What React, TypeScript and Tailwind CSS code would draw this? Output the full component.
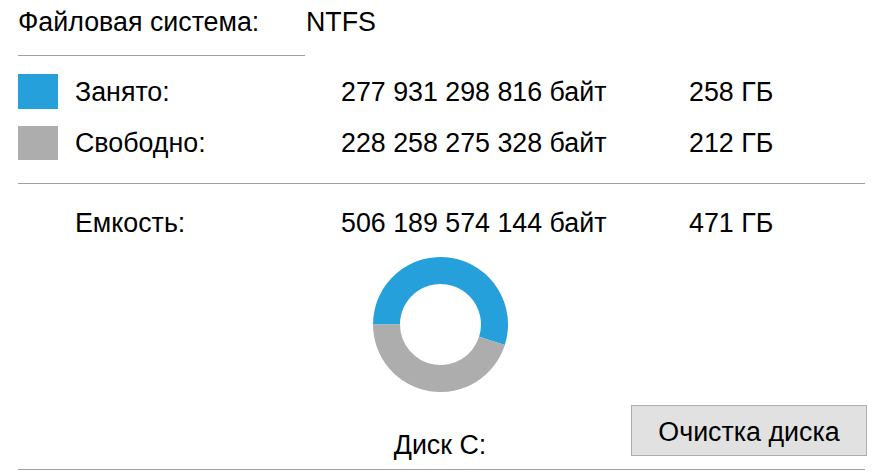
import React from "react";

function sector(cx: number, cy: number, ro: number, ri: number, a0: number, a1: number) {
  const r = (d: number) => (d * Math.PI) / 180;
  const p = (rad: number, a: number) => [cx + rad * Math.cos(r(a)), cy + rad * Math.sin(r(a))];
  const large = a1 - a0 > 180 ? 1 : 0;
  const [x0, y0] = p(ro, a0);
  const [x1, y1] = p(ro, a1);
  const [x2, y2] = p(ri, a1);
  const [x3, y3] = p(ri, a0);
  return `M${x0} ${y0} A${ro} ${ro} 0 ${large} 1 ${x1} ${y1} L${x2} ${y2} A${ri} ${ri} 0 ${large} 0 ${x3} ${y3} Z`;
}

function Donut() {
  const used = 277931298816 / 506189574144;
  const end = 180 + used * 360;
  return (
    <svg width="135" height="135" viewBox="0 0 135 135">
      <path d={sector(67.5, 67.5, 67.5, 40.5, 180, end)} fill="#26a0da" />
      <path d={sector(67.5, 67.5, 67.5, 40.5, end, 540)} fill="#adadad" />
    </svg>
  );
}

export default function App() {
  const font = { fontFamily: '"Liberation Sans", Arial, sans-serif' };
  return (
    <div
      className="w-[883px] h-[475px] bg-white text-black text-[26.8px] leading-[30px] px-[18px] pt-[7px] overflow-hidden"
      style={font}
    >
      <div className="flex h-[30px]">
        <span className="w-[288px]">Файловая система:</span>
        <span>NTFS</span>
      </div>
      <div className="mt-[18px] h-px w-[287px] bg-[#a0a0a0]" />

      <div className="mt-[18px] grid grid-cols-[57px_266px_348px_auto] items-center h-[35px]">
        <div className="w-[40px] h-[35px] bg-[#26a0da]" />
        <span>Занято:</span>
        <span>277 931 298 816 байт</span>
        <span>258 ГБ</span>
      </div>
      <div className="mt-[16px] grid grid-cols-[57px_266px_348px_auto] items-center h-[35px]">
        <div className="w-[40px] h-[34px] bg-[#adadad]" />
        <span>Свободно:</span>
        <span>228 258 275 328 байт</span>
        <span>212 ГБ</span>
      </div>
      <div className="mt-[23px] h-px w-full bg-[#a0a0a0]" />

      <div className="mt-[24px] grid grid-cols-[57px_266px_348px_auto] items-center h-[30px]">
        <div />
        <span>Емкость:</span>
        <span>506 189 574 144 байт</span>
        <span>471 ГБ</span>
      </div>

      <div className="mt-[19px] flex justify-center pr-[3px]">
        <Donut />
      </div>

      <div className="mt-[13px] grid grid-cols-[1fr_auto_1fr] h-[55px]">
        <div />
        <span className="self-end pr-[3px]">Диск C:</span>
        <div className="flex justify-end -mr-[2px]">
          <button className="w-[236px] h-[51px] bg-[#e1e1e1] border border-[#adadad] text-[26.8px] leading-[30px] pt-[2px]" style={font}>
            Очистка диска
          </button>
        </div>
      </div>
      <div className="mt-[9px] h-px w-full bg-[#a0a0a0]" />
    </div>
  );
}
